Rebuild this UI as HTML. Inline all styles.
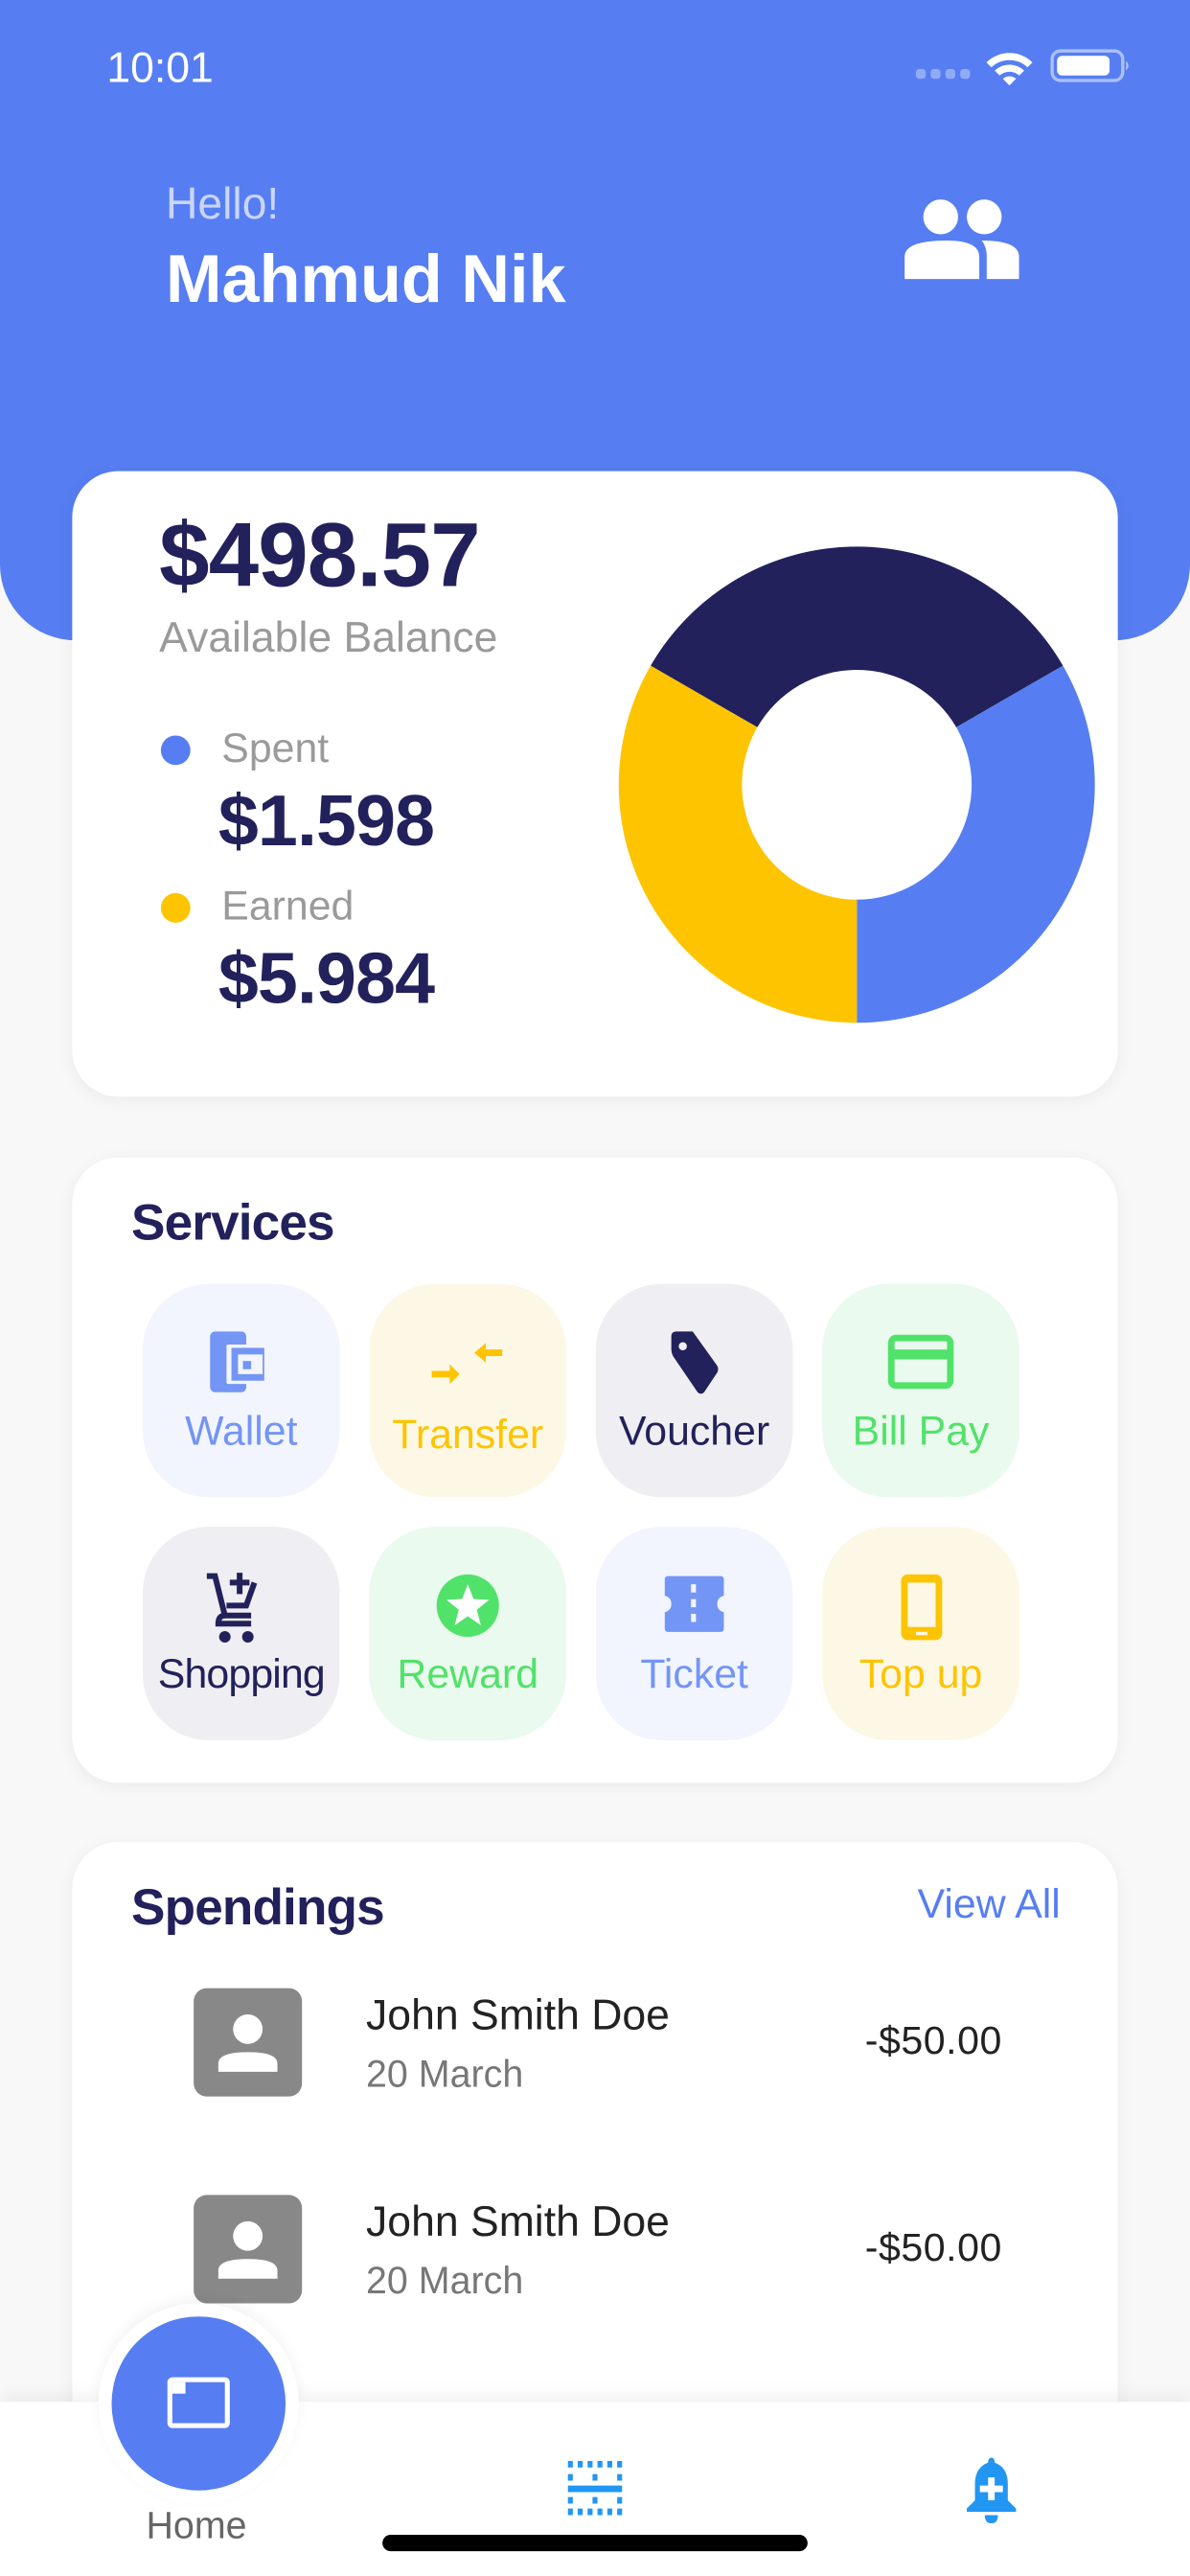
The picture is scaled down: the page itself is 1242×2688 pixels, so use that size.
<!DOCTYPE html>
<html><head><meta charset="utf-8"><style>
html,body{margin:0;padding:0;background:#f8f8f8;}
body{width:1242px;height:2688px;overflow:hidden;position:relative;font-family:"Liberation Sans",sans-serif;}
#w{position:absolute;left:0;top:0;width:725px;height:1569px;transform:scale(1.713103);transform-origin:0 0;background:#f8f8f8;}
.a{position:absolute;}
.hdr{left:0;top:0;width:725px;height:390px;background:#567ef2;border-radius:0 0 46px 46px;}
.card{background:#fff;border-radius:28px;box-shadow:0 2px 10px rgba(0,0,0,0.06);}
.t{position:absolute;white-space:nowrap;line-height:1;}
.tile{position:absolute;width:120px;height:130px;border-radius:40px;}
.lbl{position:absolute;left:-10px;width:140px;text-align:center;font-size:25px;letter-spacing:0;top:76px;}
.ic{position:absolute;left:35px;top:26px;}
</style></head><body><div id="w">
<div class="a hdr"></div>
<div class="t" style="left:65px;top:28px;font-size:26px;color:#fff;">10:01</div>
<svg class="a" style="left:555px;top:28px" width="135" height="26" viewBox="0 0 135 26">
<g fill="#fff" opacity=".35"><rect x="3" y="14" width="6" height="6" rx="2"/><rect x="12" y="14" width="6" height="6" rx="2"/><rect x="21" y="14" width="6" height="6" rx="2"/><rect x="30" y="14" width="6" height="6" rx="2"/></g>
<path d="M46 10 A20 20 0 0 1 74 10 L71 13 A16 16 0 0 0 49 13Z M51 15 A13 13 0 0 1 69 15 L66 18 A9 9 0 0 0 54 18Z M56 20 A6 6 0 0 1 64 20 L60 24Z" fill="#fff"/>
<rect x="86" y="3" width="43" height="18" rx="5" fill="none" stroke="#fff" stroke-opacity=".5" stroke-width="2"/>
<rect x="89" y="6" width="32" height="12" rx="3" fill="#fff"/>
<path d="M131 9 Q134 12 131 15Z" fill="#fff" opacity=".5"/></svg>
<div class="t" style="left:101px;top:111px;font-size:27px;color:#c9d5fb;">Hello!</div>
<div class="t" style="left:101px;top:150px;font-size:41px;font-weight:bold;color:#fff;letter-spacing:0;">Mahmud Nik</div>
<svg class="a" style="left:548px;top:120px" width="76" height="50" viewBox="0 0 100 66"><g fill="#fff"><circle cx="33" cy="16" r="14"/><circle cx="68" cy="16" r="14"/><path d="M4 66 V48 Q4 35 38 35 Q64 35 64 48 V66Z"/><path d="M66 35 Q96 35 96 48 V66 H70 V48 Q70 40 66 35Z"/></g></svg>

<div class="a card" style="left:44px;top:287px;width:637px;height:381px;"></div>
<div class="t" style="left:97px;top:311px;font-size:55px;font-weight:bold;color:#22215b;letter-spacing:-0.5px;">$498.57</div>
<div class="t" style="left:97px;top:375px;font-size:26px;color:#9a9a9a;">Available Balance</div>
<div class="a" style="left:98px;top:448px;width:18px;height:18px;border-radius:50%;background:#567ef2"></div>
<div class="t" style="left:135px;top:444px;font-size:25px;color:#9a9a9a;">Spent</div>
<div class="t" style="left:133px;top:479px;font-size:44px;font-weight:bold;color:#22215b;letter-spacing:-0.5px;">$1.598</div>
<div class="a" style="left:98px;top:544px;width:18px;height:18px;border-radius:50%;background:#fec400"></div>
<div class="t" style="left:135px;top:540px;font-size:25px;color:#9a9a9a;">Earned</div>
<div class="t" style="left:133px;top:575px;font-size:44px;font-weight:bold;color:#22215b;letter-spacing:-0.5px;">$5.984</div>
<svg class="a" style="left:0;top:0" width="725" height="700">
<path d="M396.4 405.5 A145 145 0 0 1 647.6 405.5 L582.6 443 A70 70 0 0 0 461.4 443Z" fill="#22215b"/>
<path d="M647.6 405.5 A145 145 0 0 1 522 623 L522 548 A70 70 0 0 0 582.6 443Z" fill="#567ef2"/>
<path d="M522 623 A145 145 0 0 1 396.4 405.5 L461.4 443 A70 70 0 0 0 522 548Z" fill="#fec400"/>
</svg>

<div class="a card" style="left:44px;top:705px;width:637px;height:381px;"></div>
<div class="t" style="left:80px;top:729px;font-size:31px;font-weight:bold;color:#22215b;letter-spacing:-0.5px;">Services</div>

<div class="tile" style="left:87px;top:782px;background:#f2f5fe;">
<svg class="ic" width="50" height="42" viewBox="0 0 50 42"><rect x="6" y="3" width="22" height="37" rx="3" fill="#7395f5"/><rect x="16" y="11" width="24" height="24" rx="1" fill="#f2f5fe"/><rect x="19" y="13" width="20" height="20" fill="#7395f5"/><rect x="23" y="17" width="15" height="12" fill="#f2f5fe"/><rect x="26" y="21" width="5" height="5" fill="#7395f5"/></svg>
<div class="lbl" style="top:76px;color:#7395f5;">Wallet</div></div>

<div class="tile" style="left:225px;top:782px;background:#fdf8e5;">
<svg class="ic" width="50" height="42" viewBox="0 0 50 42"><g fill="#fec400"><path d="M3 27 H14 V23 L20 29 L14 35 V31 H3Z"/><path d="M46 14 H36 V10 L29 16 L36 22 V18 H46Z"/></g></svg>
<div class="lbl" style="top:78px;color:#fec400;">Transfer</div></div>

<div class="tile" style="left:363px;top:782px;background:#efeff3;">
<svg class="ic" width="50" height="46" viewBox="0 0 50 46"><path d="M7 6 Q7 3 10 3 H20 L35 24 Q36 26 35 28 L27 40 Q25 42 23 40 L8 18 Q7 16 7 14Z" fill="#22215b" transform="translate(4,0)"/><circle cx="14" cy="12" r="2.5" fill="#efeff3" transform="translate(4,0)"/></svg>
<div class="lbl" style="top:76px;color:#22215b;">Voucher</div></div>

<div class="tile" style="left:501px;top:782px;background:#eafaee;">
<svg class="ic" width="50" height="42" viewBox="0 0 50 42"><rect x="7" y="7" width="36" height="29" rx="3" fill="none" stroke="#51e26a" stroke-width="4"/><rect x="7" y="14" width="36" height="6" fill="#51e26a"/></svg>
<div class="lbl" style="top:76px;color:#51e26a;">Bill Pay</div></div>

<div class="tile" style="left:87px;top:930px;background:#efeff3;">
<svg class="ic" width="50" height="46" viewBox="0 0 50 46"><g fill="none" stroke="#22215b" stroke-width="3.5"><path d="M4 4 H9 L15 28 H31"/><path d="M15 28 Q11 28 11 33 H31"/><path d="M33 8 L28 22 H16"/><path d="M24 2 V15 M18 8 H30"/></g><circle cx="15" cy="41" r="3.5" fill="#22215b"/><circle cx="29" cy="41" r="3.5" fill="#22215b"/></svg>
<div class="lbl" style="top:76px;color:#22215b;letter-spacing:-0.5px;">Shopping</div></div>

<div class="tile" style="left:225px;top:930px;background:#eafaee;">
<svg class="ic" width="50" height="46" viewBox="0 0 50 46"><circle cx="25" cy="22" r="19" fill="#51e26a"/><path d="M25 9 L28.5 18 L38 18.5 L30.5 24.5 L33 34 L25 28.5 L17 34 L19.5 24.5 L12 18.5 L21.5 18Z" fill="#fff"/></svg>
<div class="lbl" style="top:76px;color:#51e26a;">Reward</div></div>

<div class="tile" style="left:363px;top:930px;background:#f2f5fe;">
<svg class="ic" width="50" height="46" viewBox="0 0 50 46"><path d="M7 6 Q7 4 9 4 H41 Q43 4 43 6 V16 Q39 17 39 21 Q39 25 43 26 V36 Q43 38 41 38 H9 Q7 38 7 36 V26 Q11 25 11 21 Q11 17 7 16Z" fill="#7395f5"/><g fill="#f2f5fe"><rect x="23" y="9" width="3" height="5"/><rect x="23" y="18" width="3" height="5"/><rect x="23" y="27" width="3" height="5"/></g></svg>
<div class="lbl" style="top:76px;color:#7395f5;">Ticket</div></div>

<div class="tile" style="left:501px;top:930px;background:#fdf8e5;">
<svg class="ic" width="50" height="46" viewBox="0 0 50 46"><rect x="13" y="3" width="25" height="40" rx="4" fill="#fec400"/><rect x="17" y="8" width="17" height="27" fill="#fdf8e5"/><rect x="22" y="38" width="7" height="2" fill="#fdf8e5"/></svg>
<div class="lbl" style="top:76px;color:#fec400;">Top up</div></div>

<div class="a card" style="left:44px;top:1122px;width:637px;height:420px;"></div>
<div class="t" style="left:80px;top:1146px;font-size:31px;font-weight:bold;color:#22215b;letter-spacing:-0.5px;">Spendings</div>
<div class="t" style="left:559px;top:1148px;font-size:25px;color:#567ef2;">View All</div>

<div class="a" style="left:118px;top:1211px;width:66px;height:66px;border-radius:8px;background:#888;"></div>
<svg class="a" style="left:118px;top:1211px" width="66" height="66" viewBox="0 0 66 66"><circle cx="33" cy="25" r="9" fill="#fff"/><path d="M15 51 V46 Q15 39 33 39 Q51 39 51 46 V51Z" fill="#fff"/></svg>
<div class="t" style="left:223px;top:1214px;font-size:26px;color:#222;">John Smith Doe</div>
<div class="t" style="left:223px;top:1252px;font-size:23px;color:#777;">20 March</div>
<div class="t" style="left:527px;top:1232px;font-size:24px;color:#222;letter-spacing:0.3px;">-$50.00</div>

<div class="a" style="left:118px;top:1337px;width:66px;height:66px;border-radius:8px;background:#888;"></div>
<svg class="a" style="left:118px;top:1337px" width="66" height="66" viewBox="0 0 66 66"><circle cx="33" cy="25" r="9" fill="#fff"/><path d="M15 51 V46 Q15 39 33 39 Q51 39 51 46 V51Z" fill="#fff"/></svg>
<div class="t" style="left:223px;top:1340px;font-size:26px;color:#222;">John Smith Doe</div>
<div class="t" style="left:223px;top:1378px;font-size:23px;color:#777;">20 March</div>
<div class="t" style="left:527px;top:1358px;font-size:24px;color:#222;letter-spacing:0.3px;">-$50.00</div>

<div class="a" style="left:0;top:1463px;width:725px;height:106px;background:#fff;box-shadow:0 -4px 10px rgba(0,0,0,0.06);"></div>
<div class="a" style="left:60px;top:1403px;width:122px;height:122px;border-radius:50%;background:#fff;box-shadow:0 -3px 8px rgba(0,0,0,0.05);"></div>
<div class="a" style="left:68px;top:1411px;width:106px;height:106px;border-radius:50%;background:#567ef2;"></div>
<svg class="a" style="left:100px;top:1443px" width="42" height="42" viewBox="0 0 42 42"><rect x="2" y="5" width="38" height="31" rx="3" fill="#fff"/><rect x="5" y="8" width="32" height="25" fill="#567ef2"/><rect x="5" y="8" width="8" height="7" fill="#fff"/></svg>
<div class="t" style="left:89px;top:1527px;font-size:23px;color:#666;">Home</div>
<svg class="a" style="left:345px;top:1498px" width="36" height="36" viewBox="0 0 36 36"><g fill="#2196f3"><g><rect x="1" y="1" width="3" height="4"/><rect x="7" y="1" width="3" height="4"/><rect x="13" y="1" width="3" height="4"/><rect x="19" y="1" width="3" height="4"/><rect x="25" y="1" width="3" height="4"/><rect x="31" y="1" width="3" height="4"/></g><rect x="1" y="9" width="3" height="4"/><rect x="16" y="9" width="3" height="4"/><rect x="31" y="9" width="3" height="4"/><rect x="1" y="16" width="33" height="4"/><rect x="1" y="23" width="3" height="4"/><rect x="16" y="23" width="3" height="4"/><rect x="31" y="23" width="3" height="4"/><g><rect x="1" y="30" width="3" height="4"/><rect x="7" y="30" width="3" height="4"/><rect x="13" y="30" width="3" height="4"/><rect x="19" y="30" width="3" height="4"/><rect x="25" y="30" width="3" height="4"/><rect x="31" y="30" width="3" height="4"/></g></g></svg>
<svg class="a" style="left:586px;top:1496px" width="36" height="42" viewBox="0 0 36 42"><path d="M18 1 Q20 1 20 4 Q28 7 28 17 V27 L33 32 V34 H3 V32 L8 27 V17 Q8 7 16 4 Q16 1 18 1Z" fill="#2196f3"/><path d="M14 36 H22 Q22 41 18 41 Q14 41 14 36Z" fill="#2196f3"/><path d="M16 13 H20 V18 H25 V22 H20 V27 H16 V22 H11 V18 H16Z" fill="#fff"/></svg>
<div class="a" style="left:233px;top:1544px;width:259px;height:10px;border-radius:5px;background:#000;"></div>
</div></body></html>
